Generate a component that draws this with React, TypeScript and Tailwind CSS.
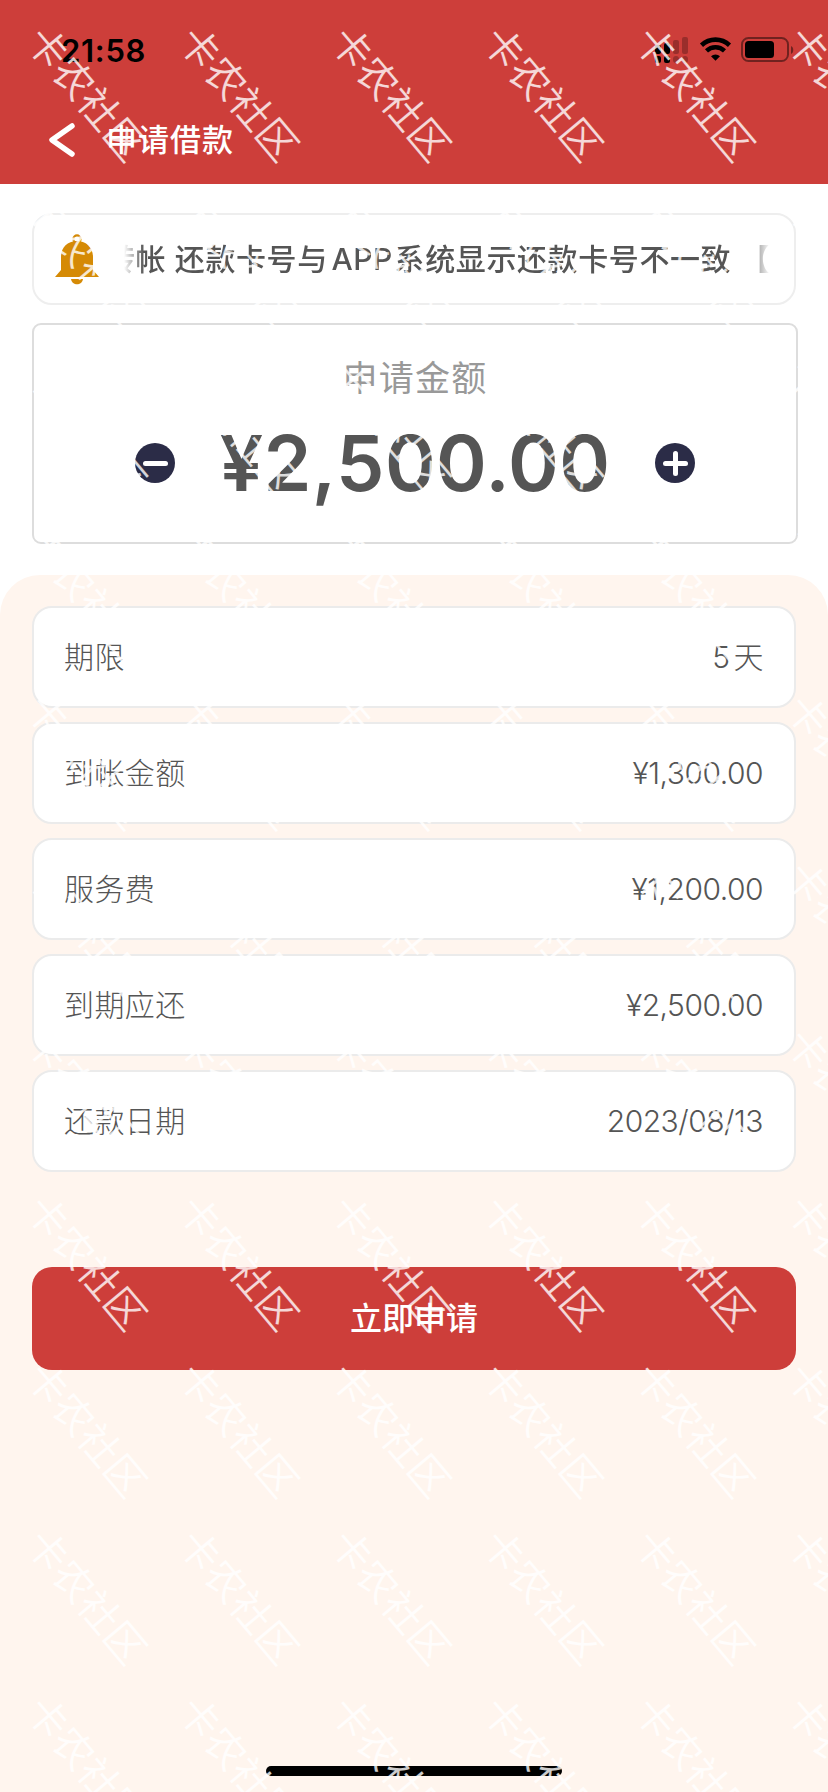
import React from 'react'

const rows = [
  { label: '期限', value: '5 天' },
  { label: '到帐金额', value: '¥1,300.00' },
  { label: '服务费', value: '¥1,200.00' },
  { label: '到期应还', value: '¥2,500.00' },
  { label: '还款日期', value: '2023/08/13' },
]

function StatusBar() {
  return (
    <div className="flex h-[100px] items-center justify-between pl-[61px] pr-[33px] text-black">
      <span className="text-[31px] leading-none font-semibold tracking-[0.7px]">21:58</span>
      <svg width="142" height="28" viewBox="0 0 142 28">
        <rect x="2" y="9" width="6" height="9" rx="2" />
        <rect x="11" y="7" width="6" height="11" rx="2" />
        <rect x="20" y="4" width="6" height="14" rx="2" opacity="0.25" />
        <rect x="29" y="1" width="6" height="17" rx="2" opacity="0.25" />
        <rect x="2" y="20" width="6" height="7" rx="2" />
        <rect x="11" y="20" width="6" height="7" rx="2" />
        <rect x="20" y="20" width="6" height="7" rx="3" opacity="0.25" />
        <rect x="29" y="20" width="6" height="7" rx="3" opacity="0.25" />
        <path d="M48.5 9.2a20.5 20.5 0 0 1 28 0" fill="none" stroke="#000" strokeWidth="4.6" />
        <path d="M53.5 14.8a13 13 0 0 1 18 0" fill="none" stroke="#000" strokeWidth="4.4" />
        <path d="M58 20.2a6.8 6.8 0 0 1 9 0l-4.5 4.6z" />
        <rect x="89" y="2" width="46" height="23" rx="6.5" fill="none" stroke="#000" strokeWidth="2" opacity="0.45" />
        <rect x="92" y="5" width="29" height="17" rx="3.5" />
        <path d="M138 10v8c3-1.2 3-6.8 0-8z" opacity="0.45" />
      </svg>
    </div>
  )
}

function Bell() {
  return (
    <svg width="44" height="51" viewBox="0 0 44 51" fill="#d58a05">
      <circle cx="22" cy="5" r="3.6" fill="none" stroke="#d58a05" strokeWidth="2.2" />
      <path d="M22 7c10 0 16 7 16 16v13l6 7H0l6-7V23C6 14 12 7 22 7z" />
      <path d="M16 45h12c-1 7-11 7-12 0z" />
    </svg>
  )
}

function Watermark() {
  return (
    <div className="pointer-events-none absolute inset-0 overflow-hidden pt-[10px] pl-[10px]">
      <div className="grid w-[912px] grid-cols-[repeat(6,152px)] auto-rows-[167px]">
        {Array.from({ length: 66 }, (_, i) => (
          <div key={i} className="flex items-center justify-center">
            <span className="shrink-0 rotate-50 text-[40px] leading-none font-[350] whitespace-nowrap text-white/80">
              卡农社区
            </span>
          </div>
        ))}
      </div>
    </div>
  )
}

export default function App() {
  return (
    <div className="relative flex h-[1792px] w-[828px] flex-col overflow-hidden bg-white font-['Inter','Noto_Sans_CJK_SC',sans-serif] text-[#555]">
      <header className="h-[184px] bg-[#cd3e3a] text-white">
        <StatusBar />
        <div className="flex h-[79px] items-center pl-[49px]">
          <svg width="27" height="34" viewBox="0 0 27 34" fill="none" stroke="#fff" strokeWidth="5.5" strokeLinecap="round" strokeLinejoin="round">
            <path d="M23 3L3 17l20 14" />
          </svg>
          <h1 className="ml-[30px] text-[31px] leading-none font-medium tracking-[1px]">申请借款</h1>
        </div>
      </header>

      <section className="mx-8 mt-[29px] flex h-[92px] items-center rounded-[20px] border-2 border-[#eee] pl-[21px]">
        <Bell />
        <div className="ml-[25px] w-[646px] overflow-hidden [mask-image:linear-gradient(to_right,transparent,black_20px,black_622px,transparent)]">
          <p className="-ml-[19px] text-[30px] leading-[44px] font-medium tracking-[0.6px] whitespace-pre">
            转帐 还款卡号与 <span className="-mr-[7px] -ml-[5px]">APP</span> 系统显示还款卡号不一致 【注意】
          </p>
        </div>
      </section>

      <section className="mr-[30px] ml-8 mt-[18px] flex h-[221px] flex-col items-center rounded-[9px] border-2 border-[#ddd] pt-[29px]">
        <p className="text-[35px] leading-[48px] tracking-[1.3px] text-[#999]">申请金额</p>
        <div className="mt-[15px] flex items-center">
          <button type="button" className="flex size-10 items-center justify-center rounded-full bg-[#2b2c47]">
            <span className="h-[5px] w-[25px] rounded-full bg-white" />
          </button>
          <span className="w-[480px] text-center text-[77px] leading-[92px] font-semibold tracking-[0.4px]">¥2,500.00</span>
          <button type="button" className="grid size-10 place-items-center rounded-full bg-[#2b2c47]">
            <span className="col-start-1 row-start-1 h-[5px] w-[25px] rounded-full bg-white" />
            <span className="col-start-1 row-start-1 h-[25px] w-[5px] rounded-full bg-white" />
          </button>
        </div>
      </section>

      <main className="mt-[31px] flex flex-1 flex-col rounded-t-[40px] bg-[#fff5ee] px-8 pt-[31px]">
        <div className="flex flex-col gap-[14px]">
          {rows.map((row) => (
            <div
              key={row.label}
              className="flex h-[102px] items-center justify-between rounded-[20px] border-2 border-[#ebebeb] bg-white pr-[31px] pl-[30px] text-[30px] font-light"
            >
              <span className="tracking-[0.4px]">{row.label}</span>
              <span className="tracking-[-0.5px] [word-spacing:-4px]">{row.value}</span>
            </div>
          ))}
        </div>
        <button
          type="button"
          className="mt-[95px] h-[103px] shrink-0 rounded-[20px] bg-[#cd3e3a] text-[32px] font-medium text-white"
        >
          立即申请
        </button>
        <div className="mt-auto mb-4 h-[10px] w-[296px] self-center rounded-full bg-black" />
      </main>

      <Watermark />
    </div>
  )
}
